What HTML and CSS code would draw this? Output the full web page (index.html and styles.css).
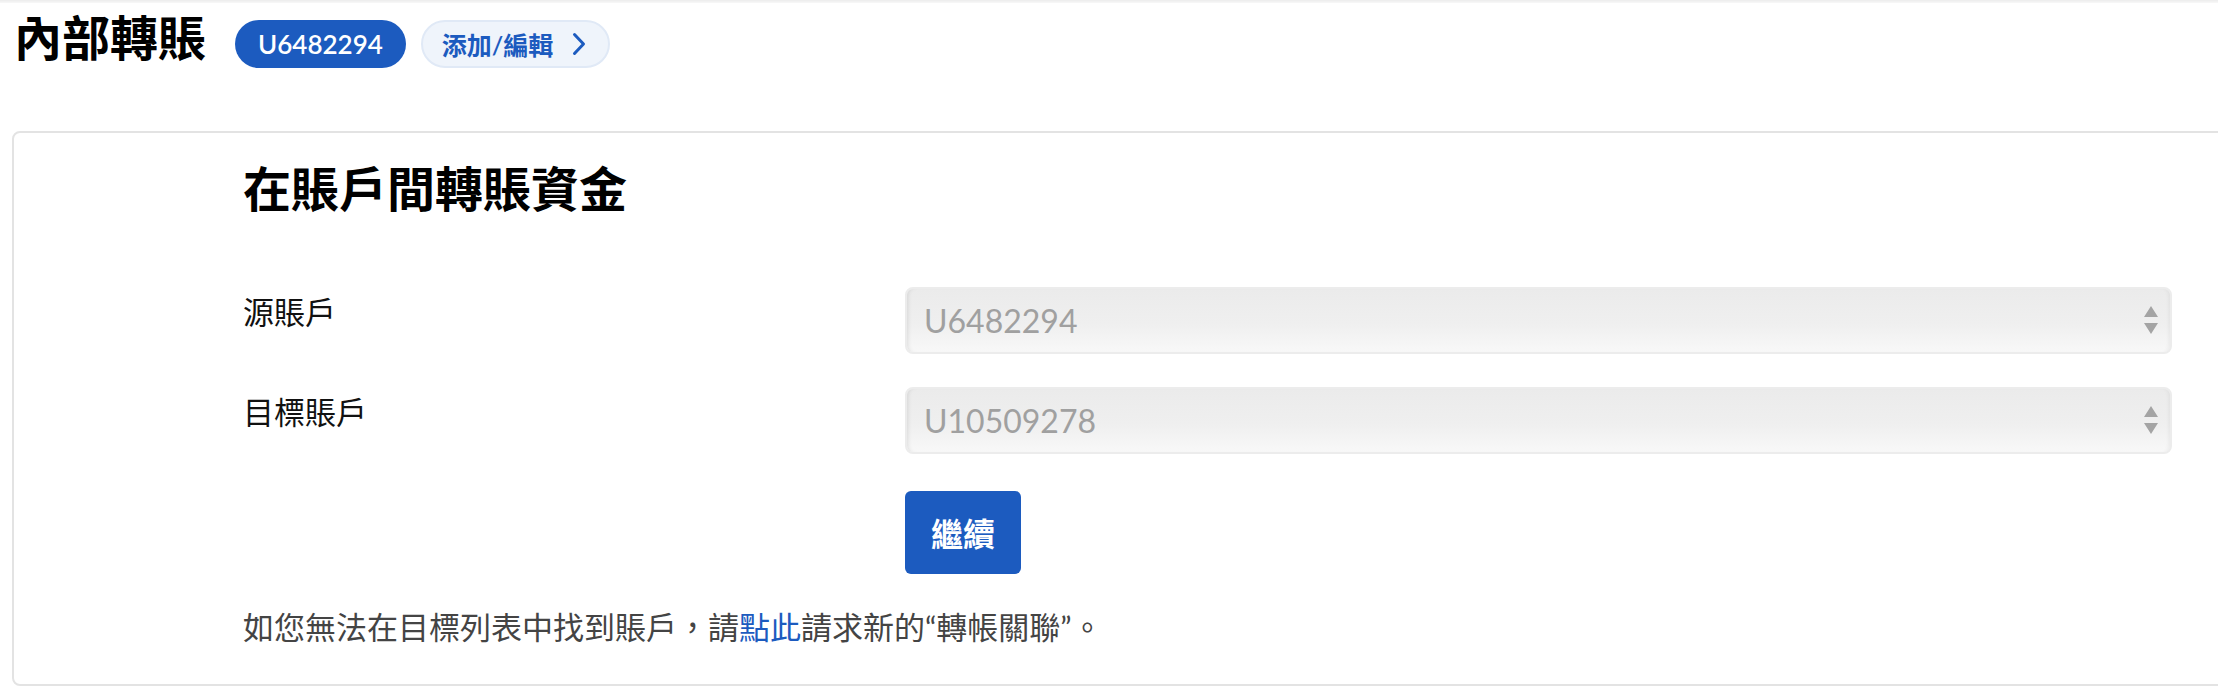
FILE: index.html
```html
<!DOCTYPE html>
<html lang="zh-Hant">
<head>
<meta charset="utf-8">
<title>內部轉賬</title>
<link rel="stylesheet" href="styles.css">
</head>
<body>
<div class="topline"></div>
<header class="page-head">
  <h1 class="page-title">內部轉賬</h1>
  <span class="acct-badge">U6482294</span>
  <button class="edit-pill" type="button">
    <span>添加/編輯</span>
    <svg class="chev" width="14" height="24" viewBox="0 0 14 24" aria-hidden="true"><path d="M2.5 2.5 L11.5 12 L2.5 21.5" fill="none" stroke="#1c5bbf" stroke-width="3" stroke-linecap="round" stroke-linejoin="round"/></svg>
  </button>
</header>
<section class="card">
  <h2 class="card-title">在賬戶間轉賬資金</h2>
  <div class="form-grid">
    <label class="field-label">源賬戶</label>
    <div class="select-box">
      <span class="select-value">U6482294</span>
      <svg class="arrows" width="14" height="28" viewBox="0 0 14 28" aria-hidden="true"><path d="M7 0 L14 11 L0 11 Z M0 17 L14 17 L7 28 Z" fill="#a4a4a4"/></svg>
    </div>
    <label class="field-label">目標賬戶</label>
    <div class="select-box">
      <span class="select-value">U10509278</span>
      <svg class="arrows" width="14" height="28" viewBox="0 0 14 28" aria-hidden="true"><path d="M7 0 L14 11 L0 11 Z M0 17 L14 17 L7 28 Z" fill="#a4a4a4"/></svg>
    </div>
    <div class="spacer"></div>
    <div class="actions"><button class="btn-primary" type="button">繼續</button></div>
  </div>
  <p class="note">如您無法在目標列表中找到賬戶，請<a href="#" class="link">點此</a>請求新的“轉帳關聯”。</p>
</section>
</body>
</html>
```
FILE: styles.css
```css
html, body {
  margin: 0;
  padding: 0;
  background: #ffffff;
  overflow: hidden;
}
body {
  font-family: "Lato", "Noto Sans CJK TC", "Noto Sans", sans-serif;
  color: #111;
}
.topline {
  height: 3px;
  background: linear-gradient(#ececec, #f8f8f8);
}
.page-head {
  display: flex;
  align-items: flex-start;
  padding: 17px 14px 0 14px;
  height: 48px;
}
.page-title {
  margin: -6px 29px 0 0;
  font-size: 48px;
  line-height: 1;
  font-weight: 700;
  color: #000;
}
.acct-badge {
  display: inline-flex;
  align-items: center;
  height: 48px;
  padding: 0 23px;
  border-radius: 24px;
  background: #1c5bbf;
  color: #fff;
  font-family: "Lato", "Noto Sans", sans-serif;
  font-weight: 600;
  font-size: 26px;
  box-sizing: border-box;
}
.edit-pill {
  display: inline-flex;
  align-items: center;
  gap: 19px;
  height: 48px;
  margin-left: 15px;
  padding: 0 22px 0 19px;
  border: 2px solid #e0e9f6;
  border-radius: 24px;
  background: #eff4fb;
  color: #1c5bbf;
  font-family: "Lato", "Noto Sans CJK TC", sans-serif;
  font-weight: 600;
  font-size: 25px;
  box-sizing: border-box;
  cursor: pointer;
}
.chev { display: block; }
.card {
  margin: 63px -60px 0 12px;
  border: 2px solid #e3e3e3;
  border-radius: 8px;
  padding: 26px 0 35px 229px;
}
.card-title {
  margin: 0;
  font-size: 48px;
  line-height: 1.27;
  font-weight: 700;
  color: #000;
}
.form-grid {
  display: grid;
  grid-template-columns: 662px 1267px;
  row-gap: 33px;
  margin-top: 67px;
}
.field-label {
  font-size: 31px;
  line-height: 1.4;
  padding-top: 4px;
  color: #111;
}
.select-box {
  display: flex;
  align-items: center;
  justify-content: space-between;
  height: 67px;
  box-sizing: border-box;
  padding: 0 12px 0 17px;
  border: 2px solid #ececec;
  border-radius: 8px;
  background: linear-gradient(#ebebeb, #efefef 55%, #f8f8f8);
  box-shadow: inset 4px 0 4px -3px rgba(0,0,0,0.10), inset -4px 0 4px -3px rgba(0,0,0,0.06);
}
.select-value {
  font-family: "Lato", "Noto Sans", sans-serif;
  font-size: 32px;
  color: #a0a0a0;
}
.arrows { display: block; }
.actions { margin-top: 4px; }
.btn-primary {
  width: 116px;
  height: 83px;
  border: none;
  border-radius: 6px;
  background: #1c5bbf;
  color: #fff;
  font-family: "Noto Sans CJK TC", sans-serif;
  font-weight: 700;
  font-size: 32px;
  cursor: pointer;
}
.note {
  margin: 32px 0 0 0;
  font-size: 31px;
  line-height: 1.4;
  color: #444;
}
.link {
  color: #1c5bbf;
  text-decoration: none;
}
```
